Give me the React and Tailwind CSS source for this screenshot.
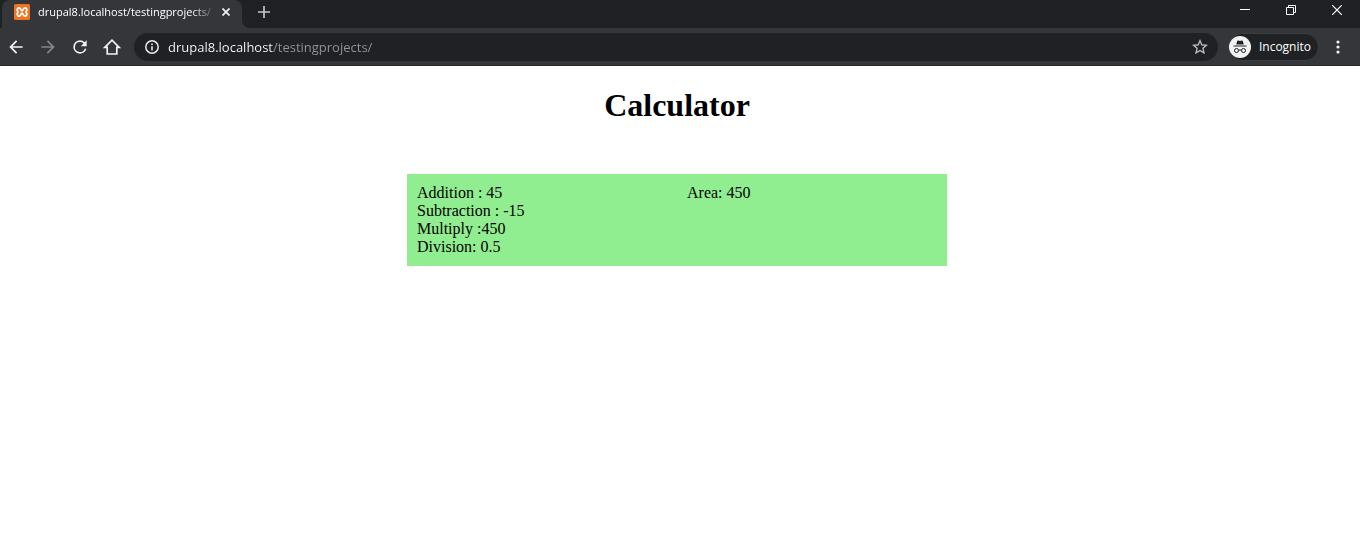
import React from "react";

const iconButton = "flex h-7 w-8 shrink-0 items-center justify-center";

function XamppIcon() {
  return (
    <svg className="h-4 w-4 shrink-0" viewBox="0 0 16 16" aria-hidden="true">
      <rect width="16" height="16" rx="1.5" fill="#ee7421" />
      <path
        d="M8 6.9C6.8 6.9 7 3.9 5 3.9 3 3.9 2.7 6.4 4 8 2.7 9.6 3 12.1 5 12.1 7 12.1 6.8 9.1 8 9.1 9.2 9.1 9 12.1 11 12.1 13 12.1 13.3 9.6 12 8 13.3 6.4 13 3.9 11 3.9 9 3.9 9.2 6.9 8 6.9z"
        fill="none"
        stroke="#fff"
        strokeWidth="1.8"
        strokeLinejoin="round"
      />
    </svg>
  );
}

function IncognitoIcon() {
  return (
    <svg className="h-[22px] w-[22px] shrink-0" viewBox="0 0 22 22" aria-hidden="true">
      <circle cx="11" cy="11" r="11" fill="#f1f3f4" />
      <path d="M7.2 8.5 8.2 5.1Q8.5 4.3 9.3 4.6L11 5l1.7-.4q.8-.3 1.1.5l1 3.4z" fill="#202124" />
      <path d="M4.5 9.5h13v1h-13z" fill="#202124" />
      <g fill="none" stroke="#202124" strokeWidth="1">
        <circle cx="7.5" cy="14.5" r="2" />
        <circle cx="14.5" cy="14.5" r="2" />
        <path d="M9.5 14.3q1.5-.7 3 0" />
      </g>
    </svg>
  );
}

function TabStrip() {
  return (
    <div className="flex h-7 items-start bg-[#202124]">
      <div className="relative ml-[2px] flex h-7 w-60 shrink-0 items-center rounded-t-lg bg-[#35363a] pb-1 pl-3">
        <span className="absolute -right-2 bottom-0 h-2 w-2 bg-[radial-gradient(circle_at_top_right,#202124_8px,#35363a_8px)]" />
        <XamppIcon />
        <span className="ml-2 w-44 text-[11px] whitespace-nowrap text-white [mask-image:linear-gradient(to_right,#000_154px,transparent_178px)]">
          drupal8.localhost/testingprojects/
        </span>
        <button aria-label="Close tab" className="flex h-6 w-6 items-center justify-center">
          <svg className="h-2 w-2" viewBox="0 0 8 8">
            <path d="m.5.5 7 7m0-7-7 7" stroke="#f1f3f4" strokeWidth="1.7" />
          </svg>
        </button>
      </div>
      <button aria-label="New tab" className="ml-2 flex h-6 w-7 items-center justify-center">
        <svg className="h-3 w-3" viewBox="0 0 12 12">
          <path d="M6 0v12M0 6h12" stroke="#c4c6c9" strokeWidth="1.7" />
        </svg>
      </button>
      <div className="ml-auto flex">
        <button aria-label="Minimize" className="flex h-5 w-[46px] items-center justify-center">
          <svg className="h-[10px] w-[10px]" viewBox="0 0 10 10">
            <path d="M0 4.5h10" stroke="#fff" />
          </svg>
        </button>
        <button aria-label="Restore" className="flex h-5 w-[46px] items-center justify-center">
          <svg className="h-[10px] w-[10px]" viewBox="0 0 10 10" fill="none" stroke="#fff">
            <path d="M.5 2.5h7v7h-7zM2.5 2.5v-2h7v7h-2" />
          </svg>
        </button>
        <button aria-label="Close window" className="flex h-5 w-[46px] items-center justify-center">
          <svg className="h-[10px] w-[10px]" viewBox="0 0 10 10">
            <path d="m0 0 10 10m0-10L0 10" stroke="#fff" strokeWidth="1.2" />
          </svg>
        </button>
      </div>
    </div>
  );
}

function Toolbar() {
  return (
    <div className="flex h-[38px] items-center border-b border-[#28292c] bg-[#35363a] pr-[6px]">
      <button aria-label="Back" className={iconButton}>
        <svg className="h-5 w-5" viewBox="0 0 24 24" fill="#f1f3f4">
          <path d="M20 11H7.83l5.59-5.59L12 4l-8 8 8 8 1.41-1.41L7.83 13H20v-2z" />
        </svg>
      </button>
      <button aria-label="Forward" className={iconButton} disabled>
        <svg className="h-5 w-5" viewBox="0 0 24 24" fill="#85868a">
          <path d="m12 4-1.41 1.41L16.17 11H4v2h12.17l-5.58 5.59L12 20l8-8z" />
        </svg>
      </button>
      <button aria-label="Reload" className={iconButton}>
        <svg className="h-5 w-5" viewBox="0 0 24 24" fill="#f1f3f4">
          <path d="M17.65 6.35A7.96 7.96 0 0 0 12 4a8 8 0 1 0 7.73 10h-2.08A6 6 0 1 1 12 6c1.66 0 3.14.69 4.22 1.78L13 11h7V4l-2.35 2.35z" />
        </svg>
      </button>
      <button aria-label="Home" className={iconButton}>
        <svg className="h-5 w-5" viewBox="0 0 20 20" fill="none" stroke="#f1f3f4" strokeWidth="1.7">
          <path d="M2.8 10.4H5.2V17H14.8V10.4H17.2L10 3.2z" />
        </svg>
      </button>
      <div className="ml-[6px] flex h-7 min-w-0 flex-1 items-center rounded-full bg-[#202124] pr-[10px] pl-[10px]">
        <button aria-label="View site information" className="shrink-0">
          <svg className="h-4 w-4" viewBox="0 0 16 16">
            <circle cx="8" cy="8" r="6.2" fill="none" stroke="#e8eaed" strokeWidth="1.5" />
            <path d="M7.2 7.2h1.6v4.2H7.2zM7.2 4.5h1.6v1.6H7.2z" fill="#e8eaed" />
          </svg>
        </button>
        <input
          aria-label="Address and search bar"
          type="text"
          defaultValue="drupal8.localhost/testingprojects/"
          className="ml-2 h-7 min-w-0 flex-1 bg-[linear-gradient(to_right,#ffffff_105px,#949599_105px)] bg-clip-text text-[13px] text-transparent outline-none"
        />
        <button aria-label="Bookmark this tab" className="shrink-0">
          <svg className="h-4 w-4" viewBox="2 2 20 20" fill="#bdc1c6">
            <path d="m22 9.24-7.19-.62L12 2 9.19 8.63 2 9.24l5.46 4.73L5.82 21 12 17.27 18.18 21l-1.63-7.03L22 9.24zM12 15.4l-3.76 2.27 1-4.28-3.32-2.88 4.38-.38L12 6.1l1.71 4.04 4.38.38-3.32 2.88 1 4.28L12 15.4z" />
          </svg>
        </button>
      </div>
      <button className="ml-[10px] flex h-7 shrink-0 items-center gap-2 rounded-full border border-[#3c3d41] bg-[#202124] pr-[7px] text-xs text-white">
        <IncognitoIcon />
        Incognito
      </button>
      <button aria-label="Menu" className="ml-[3px] flex h-7 w-8 shrink-0 items-center justify-center">
        <svg className="h-4 w-4" viewBox="0 0 16 16" fill="#f1f3f4">
          <circle cx="8" cy="3" r="1.6" />
          <circle cx="8" cy="8" r="1.6" />
          <circle cx="8" cy="13" r="1.6" />
        </svg>
      </button>
    </div>
  );
}

export default function App() {
  return (
    <div className="min-h-screen bg-white">
      <header className="font-['Open_Sans','Noto_Sans',sans-serif]">
        <TabStrip />
        <Toolbar />
      </header>
      <main className="flex flex-col items-center pt-[21px] pr-[6px] font-['Liberation_Serif',serif] text-black">
        <h1 className="text-[32px] leading-[37px] font-bold">Calculator</h1>
        <section className="mt-[50px] grid w-full max-w-[540px] grid-cols-2 bg-[#90ee90] text-base leading-[18px]">
          <div className="p-[10px]">
            <p>Addition : 45</p>
            <p>Subtraction : -15</p>
            <p>Multiply :450</p>
            <p>Division: 0.5</p>
          </div>
          <div className="p-[10px]">
            <p>Area: 450</p>
          </div>
        </section>
      </main>
    </div>
  );
}
